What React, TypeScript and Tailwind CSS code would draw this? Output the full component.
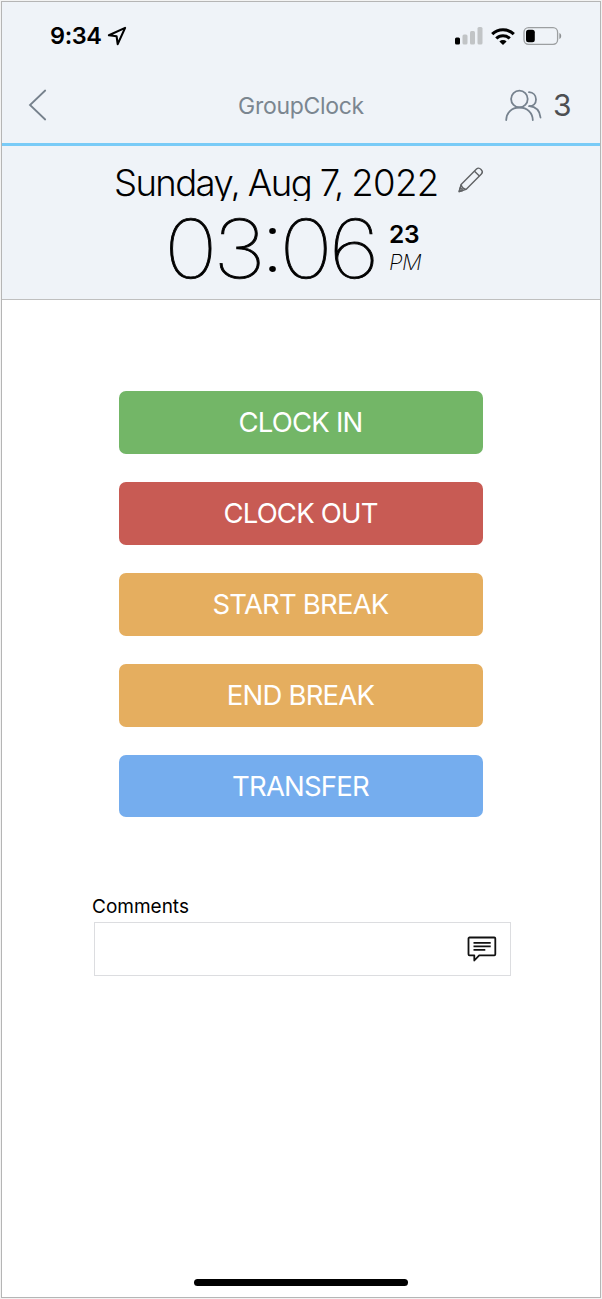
import { useState } from "react";

type Action = { label: string; color: string };

const actions: Action[] = [
  { label: "CLOCK IN", color: "bg-[#73b667]" },
  { label: "CLOCK OUT", color: "bg-[#c85b54]" },
  { label: "START BREAK", color: "bg-[#e5ae5f]" },
  { label: "END BREAK", color: "bg-[#e5ae5f]" },
  { label: "TRANSFER", color: "bg-[#75adee]" },
];

function StatusBar() {
  return (
    <div className="flex h-[68px] items-center pl-[48px] pr-[38px]">
      <span className="text-[23.5px] font-semibold leading-none tracking-[-0.4px]">9:34</span>
      <svg className="ml-[5px]" width="20" height="20" viewBox="0 0 20 20" fill="none" stroke="#000" strokeWidth="2.1" strokeLinejoin="round">
        <path d="M18.1 1.9 1.9 9.3 9.6 10.3 10.7 18.1Z" />
      </svg>
      <div className="ml-auto flex items-center">
        <svg width="28" height="18" viewBox="0 0 28 18">
          <rect x="0" y="10.5" width="5" height="7" rx="1.5" fill="#000" />
          <rect x="7.5" y="7.5" width="5" height="10" rx="1.5" fill="#c1c4c6" />
          <rect x="15" y="4" width="5" height="13.5" rx="1.5" fill="#c1c4c6" />
          <rect x="22.5" y="0" width="5" height="17.5" rx="1.5" fill="#c1c4c6" />
        </svg>
        <svg className="ml-[8px]" width="24" height="17" viewBox="0 0 24 17">
          <g fill="none" stroke="#000" strokeWidth="3.1">
            <path d="M1.2 6.2a15.5 15.5 0 0 1 21.6 0" />
            <path d="M5.3 10.5a9.5 9.5 0 0 1 13.4 0" />
          </g>
          <path d="M12 17 8.4 13.5a5.2 5.2 0 0 1 7.2 0Z" fill="#000" />
        </svg>
        <svg className="ml-[8px]" width="39" height="18" viewBox="0 0 39 18">
          <rect x="1" y="0.7" width="33.6" height="16.6" rx="4.5" fill="none" stroke="#9c9fa1" strokeWidth="1.3" />
          <rect x="3" y="2.8" width="8.8" height="12.4" rx="2.5" fill="#000" />
          <path d="M36.4 6v6c1.2-.5 1.8-1.6 1.8-3s-.6-2.5-1.8-3Z" fill="#8d9092" />
        </svg>
      </div>
    </div>
  );
}

function NavBar() {
  return (
    <div className="grid h-[73px] grid-cols-3 items-center pb-[3px] pl-[26px] pr-[29px]">
      <svg width="20" height="32" viewBox="0 0 20 32" fill="none" stroke="#76818c" strokeWidth="1.8" strokeLinecap="round">
        <path d="M17.2 1.5 2 16 17.2 30.5" />
      </svg>
      <h1 className="pl-[3px] pt-[3px] text-center text-[23px] leading-none tracking-[-0.3px] text-[#7b8690]">GroupClock</h1>
      <div className="flex items-center justify-end">
        <svg width="38" height="33" viewBox="0 0 38 33" fill="none" stroke="#76828e" strokeWidth="1.8" strokeLinecap="round">
          <circle cx="15.4" cy="10" r="8.3" />
          <path d="M2.2 31C2.4 23.8 7.5 18.5 15.4 18.5S28.6 23.8 28.8 31" />
          <path d="M25 3.2c4.1.3 7 3.2 7 7.3 0 4-2.7 6.6-6.7 6.7" />
          <path d="M25.3 17.2c6.5.5 10.5 4.5 11.2 11.3" />
        </svg>
        <span className="ml-[11px] text-[30px] leading-none tracking-[-0.5px] text-[#4d4f52]">3</span>
      </div>
    </div>
  );
}

function DateTime() {
  return (
    <div className="h-[154px] border-b border-[#bfbfbf]">
      <div className="flex pl-[112px] pt-[17px]">
        <div className="h-[38px] w-[330px] overflow-hidden whitespace-nowrap text-[36.5px] font-light leading-[40px] tracking-[-1.6px] [word-spacing:-0.1px]">
          Sunday, Aug 7, <span className="tracking-[-0.6px]">2022</span>
        </div>
        <svg className="ml-[13px] mt-[3px]" width="28" height="28" viewBox="0 0 28 28" fill="none" stroke="#606265" strokeWidth="1.4" strokeLinejoin="round">
          <path d="M2.2 25.5 4.1 18.5 19.5 3.1c2.8-2.8 7.7 2 4.9 4.9L9 23.4Z" />
          <path d="M4.1 18.5c.6 2.7 2.2 4.4 4.9 4.9M17.5 5.2l4.9 4.9M2.2 25.5l1-3.7c1 .5 2 1.5 2.5 2.7Z" />
        </svg>
      </div>
      <div className="flex">
        <div className="ml-[162px] w-[215px] origin-left scale-x-[1.12] whitespace-nowrap pt-px text-[81px] font-thin leading-[94px] tracking-[-4px] [-webkit-text-stroke:0.8px_#000]">
          03
          <span className="-ml-px -mr-px inline-block -translate-y-[7px] [-webkit-text-stroke:1.8px_#000]">:</span>
          06
        </div>
        <div className="ml-[10px] pt-[19px]">
          <div className="text-[24.5px] font-semibold leading-[28px] tracking-[-0.3px]">23</div>
          <div className="text-[22px] font-extralight italic leading-[28px] tracking-[-0.5px]">PM</div>
        </div>
      </div>
    </div>
  );
}

export default function App() {
  const [comment, setComment] = useState("");

  return (
    <div className="h-[1299px] w-[602px] bg-[#f3f3f3] p-px font-['Inter',sans-serif] text-black">
      <div className="flex h-[1297px] w-[600px] flex-col border border-[#b5b5b5] bg-white">
        <header className="bg-[#eff3f8]">
          <StatusBar />
          <NavBar />
          <div className="h-[3px] bg-[#79cbf7]" />
          <DateTime />
        </header>

        <main className="flex flex-col">
          <div className="mt-[91px] flex flex-col items-center gap-[28px]">
            {actions.map((a) => (
              <button
                key={a.label}
                className={`h-[62.9px] w-[364px] rounded-[7px] pr-px pt-px text-[27.5px] font-normal leading-none tracking-[-0.8px] text-white ${a.color}`}
              >
                {a.label}
              </button>
            ))}
          </div>

          <div className="ml-[90px] mt-[75.5px]">
            <label htmlFor="comments" className="block h-[29px] pt-px text-[19px] leading-[26px]">
              Comments
            </label>
            <div className="ml-[2px] flex h-[54px] w-[417px] items-center border border-[#dcdde0] pr-[13px]">
              <input
                id="comments"
                value={comment}
                onChange={(e) => setComment(e.target.value)}
                className="h-full min-w-0 flex-1 px-3 text-lg outline-none"
              />
              <svg width="30" height="26" viewBox="0 0 30 26" fill="none" stroke="#111" strokeWidth="1.8" strokeLinejoin="round">
                <path d="M2.5 1.5h24.8a1 1 0 0 1 1 1v15.8a1 1 0 0 1-1 1H12.2L7.3 24.5v-5.2H2.5a1 1 0 0 1-1-1V2.5a1 1 0 0 1 1-1Z" />
                <path d="M6.5 6.9h17.2M6.5 10.4h17.2M6.5 13.9h11.8" />
              </svg>
            </div>
          </div>
        </main>

        <div className="mb-[11px] mt-auto h-[7px] w-[214px] self-center rounded-full bg-black" />
      </div>
    </div>
  );
}
